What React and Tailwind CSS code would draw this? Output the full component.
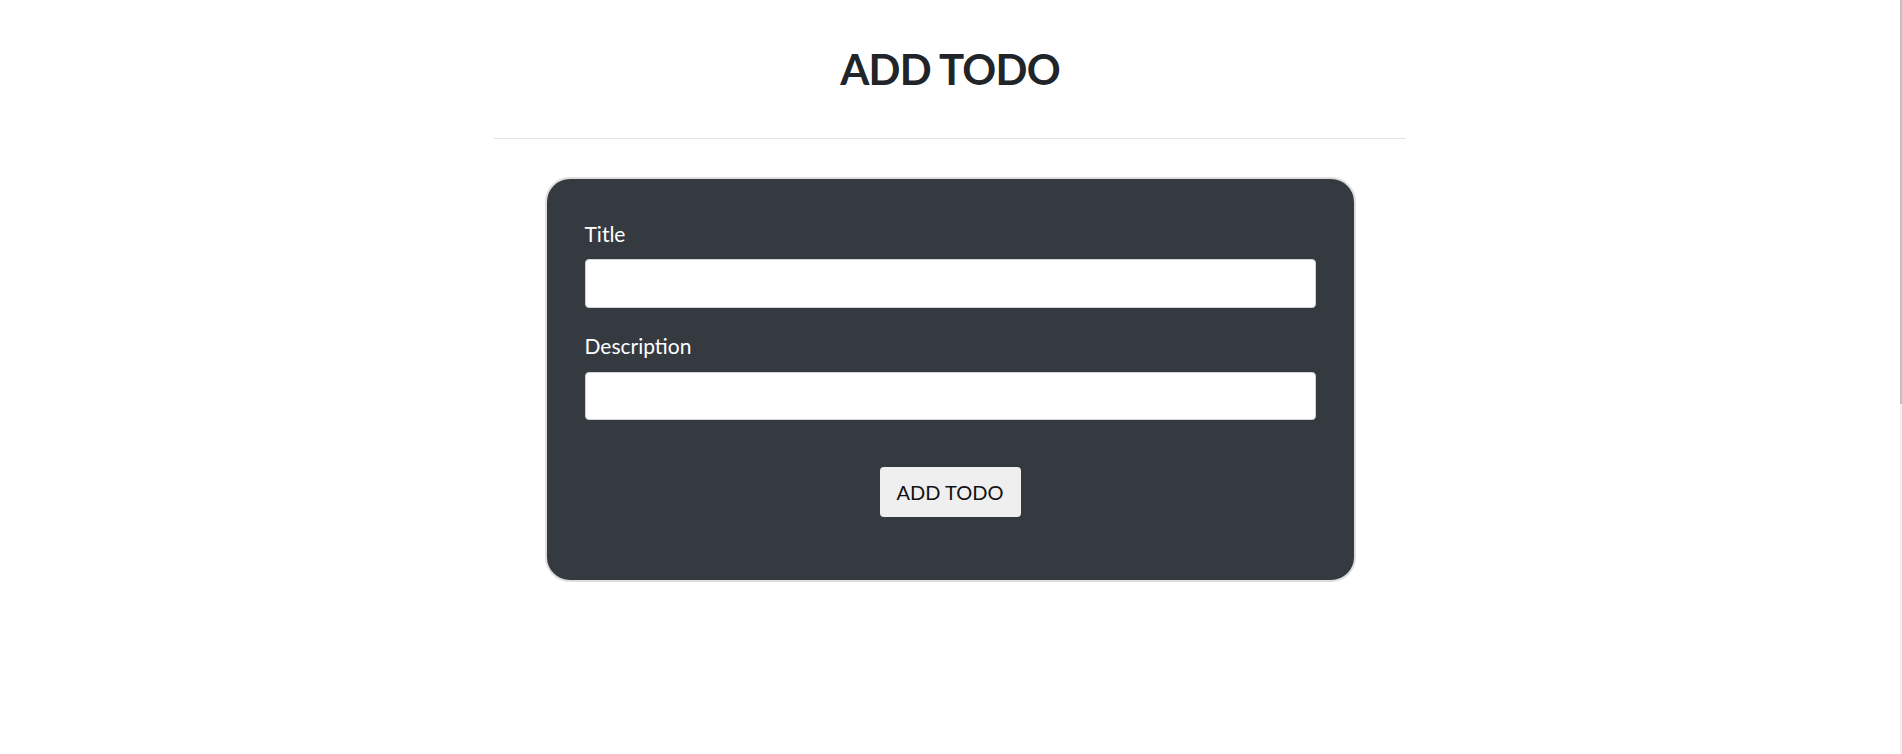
import React from 'react';

const App = () => {
  return (
    <div className="flex min-h-screen w-full bg-white" style={{ fontFamily: 'Lato, "Open Sans", sans-serif' }}>
      <div className="flex flex-1 flex-col items-center pt-[43px]">
        <h1 className="text-[42px] leading-[52px] font-bold tracking-[-0.8px] text-[#212529]">ADD TODO</h1>
        <div className="mt-[43px] h-px w-[912px] bg-[#e5e5e5]" />

        <form
          className="mt-[38px] flex w-[811px] flex-col rounded-[25px] border-2 border-[#dedede] bg-[#353a41] px-[38px] pt-[40px] pb-[63px]"
          onSubmit={(e) => e.preventDefault()}
        >
          <label className="mb-[10px] text-[21px] leading-[30px] text-white">Title</label>
          <input
            type="text"
            className="h-[49px] w-full rounded-[4px] border border-[#ced4da] bg-white px-3 outline-none"
          />

          <label className="mt-[23px] mb-[11px] text-[21px] leading-[30px] text-white">Description</label>
          <input
            type="text"
            className="h-[48px] w-full rounded-[4px] border border-[#ced4da] bg-white px-3 outline-none"
          />

          <div className="mt-[47px] flex justify-center">
            <button
              type="submit"
              className="h-[50px] w-[141px] rounded-[4px] bg-[#efefef] text-[20px] text-[#111]"
            >
              ADD TODO
            </button>
          </div>
        </form>
      </div>

      {/* thin page scrollbar on the right edge */}
      <div className="flex w-[2px] flex-col bg-[#f0f0f0]">
        <div className="h-[404px] bg-[#c1c1c1]" />
      </div>
    </div>
  );
};

export default App;
